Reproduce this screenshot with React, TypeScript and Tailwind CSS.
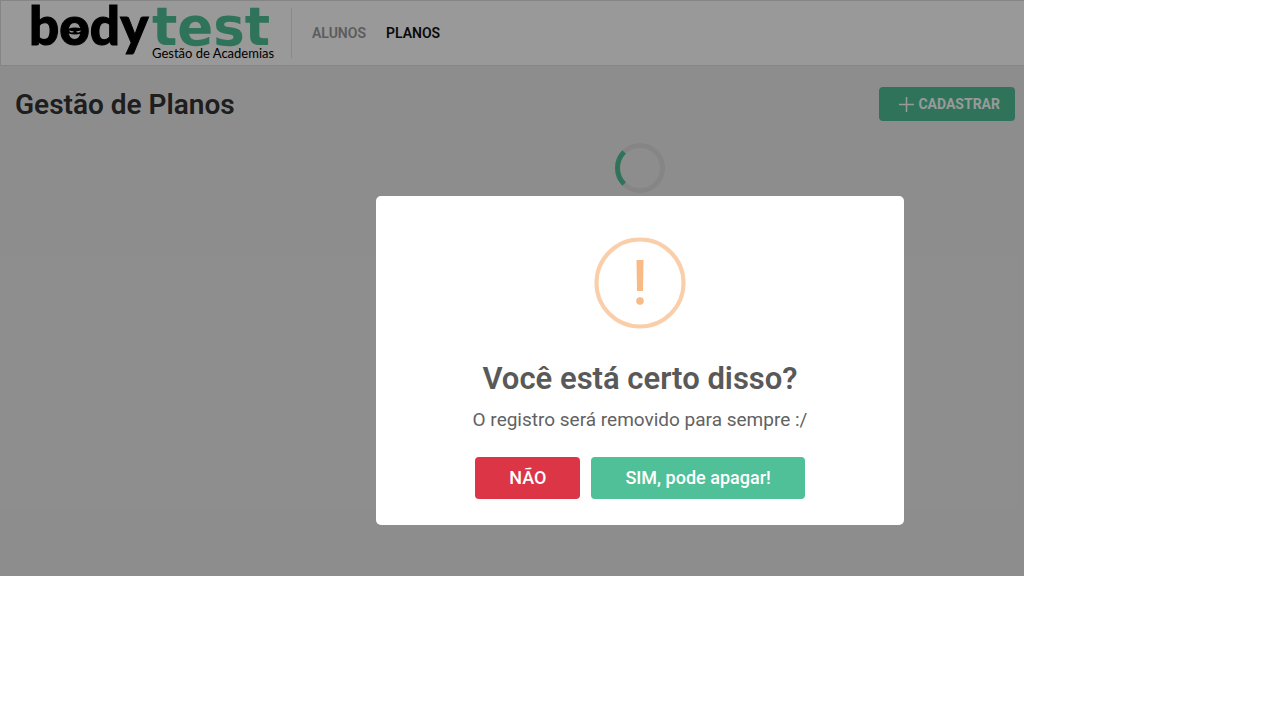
import React from "react";

function Logo() {
  return (
    <a href="#inicio" aria-label="bodytest" className="block shrink-0">
      <svg width="240" height="64" viewBox="0 0 240 64" className="block overflow-visible">
        <text x="-2" y="44" fontFamily="Lato, sans-serif" fontWeight="900" fontSize="53" fill="#000" stroke="#000" strokeWidth="1">
          body
        </text>
        <text x="121" y="44" fontFamily="'DejaVu Sans', sans-serif" fontWeight="700" fontSize="53" fill="#4fc097">
          test
        </text>
        <ellipse cx="44" cy="30" rx="8.500" ry="3.500" fill="#000" />
        <path d="M38 29.500l5 1c-1 1.800-4 1.300-5-1zM50 29.500l-5 1c1 1.800 4 1.300 5-1z" fill="#fff" />
        <text x="121" y="57" fontFamily="Lato, sans-serif" fontWeight="400" fontSize="13" fill="#000">
          Gestão de Academias
        </text>
      </svg>
    </a>
  );
}

function Header() {
  return (
    <header className="flex h-[66px] items-center border border-r-0 border-[#dedede] bg-white pl-[30px]">
      <Logo />
      <nav className="ml-5 flex h-[50px] items-center gap-5 border-l border-[#e4e4e4] pl-5 text-sm font-semibold">
        <a href="#alunos" className="text-[#999999]">ALUNOS</a>
        <a href="#planos" aria-current="page" className="text-[#111111]">PLANOS</a>
      </nav>
    </header>
  );
}

function Spinner() {
  return (
    <svg role="status" aria-label="Carregando" width="50" height="50" viewBox="0 0 50 50" fill="none" strokeWidth="5">
      <circle cx="25" cy="25" r="22.5" stroke="#dedede" />
      <path d="M9.090 9.090a22.500 22.500 0 0 0 0 31.820" stroke="#4fc097" />
    </svg>
  );
}

function ConfirmDialog() {
  return (
    <div className="fixed inset-0 flex items-center justify-center p-4">
      <div
        role="alertdialog"
        aria-modal="true"
        aria-labelledby="dialog-title"
        aria-describedby="dialog-text"
        className="flex w-full max-w-[528px] flex-col items-center rounded-[5px] bg-white px-5 pt-[41px] pb-[26px]"
      >
        <svg width="92" height="92" viewBox="0 0 92 92" aria-hidden="true">
          <circle cx="46" cy="46" r="43.500" fill="none" stroke="#facea8" strokeWidth="4" />
          <path d="M42.500 23h7l-.5 31h-6z" fill="#f8bb86" />
          <circle cx="46" cy="64" r="3.800" fill="#f8bb86" />
        </svg>
        <h2 id="dialog-title" className="mt-6 text-[31px] leading-[52px] font-semibold text-[#595959]">
          Você está certo disso?
        </h2>
        <p id="dialog-text" className="text-[19px] leading-[30px] text-[#626262]">
          O registro será removido para sempre :/
        </p>
        <div className="mt-[22px] flex gap-[11px] text-lg leading-[42px] font-medium text-white">
          <button type="button" className="rounded bg-[#dc3545] px-[34px]">NÃO</button>
          <button type="button" className="rounded bg-[#4fc097] px-[34px]">SIM, pode apagar!</button>
        </div>
      </div>
    </div>
  );
}

export default function App() {
  return (
    <div className="min-h-screen bg-white font-['Roboto',sans-serif]">
      <div className="relative h-[80vh] w-4/5 bg-[#ececec]">
        <Header />
        <main>
          <div className="flex items-start justify-between pt-[21px] pr-[9px] pl-[15px]">
            <h1 className="text-[28px] leading-9 font-semibold text-[#333333]">Gestão de Planos</h1>
            <button
              type="button"
              className="flex h-[34px] items-center gap-1 rounded bg-[#4fc097] pr-[15px] pl-5 text-sm font-bold text-white"
            >
              <svg width="15" height="15" viewBox="0 0 15 15" stroke="currentColor" strokeWidth="1.500" aria-hidden="true">
                <path d="M7.500 0v15M0 7.500h15" />
              </svg>
              CADASTRAR
            </button>
          </div>
          <div className="flex w-screen justify-center pt-5">
            <Spinner />
          </div>
        </main>
        <div className="absolute inset-0 bg-black/40" />
      </div>
      <ConfirmDialog />
    </div>
  );
}
